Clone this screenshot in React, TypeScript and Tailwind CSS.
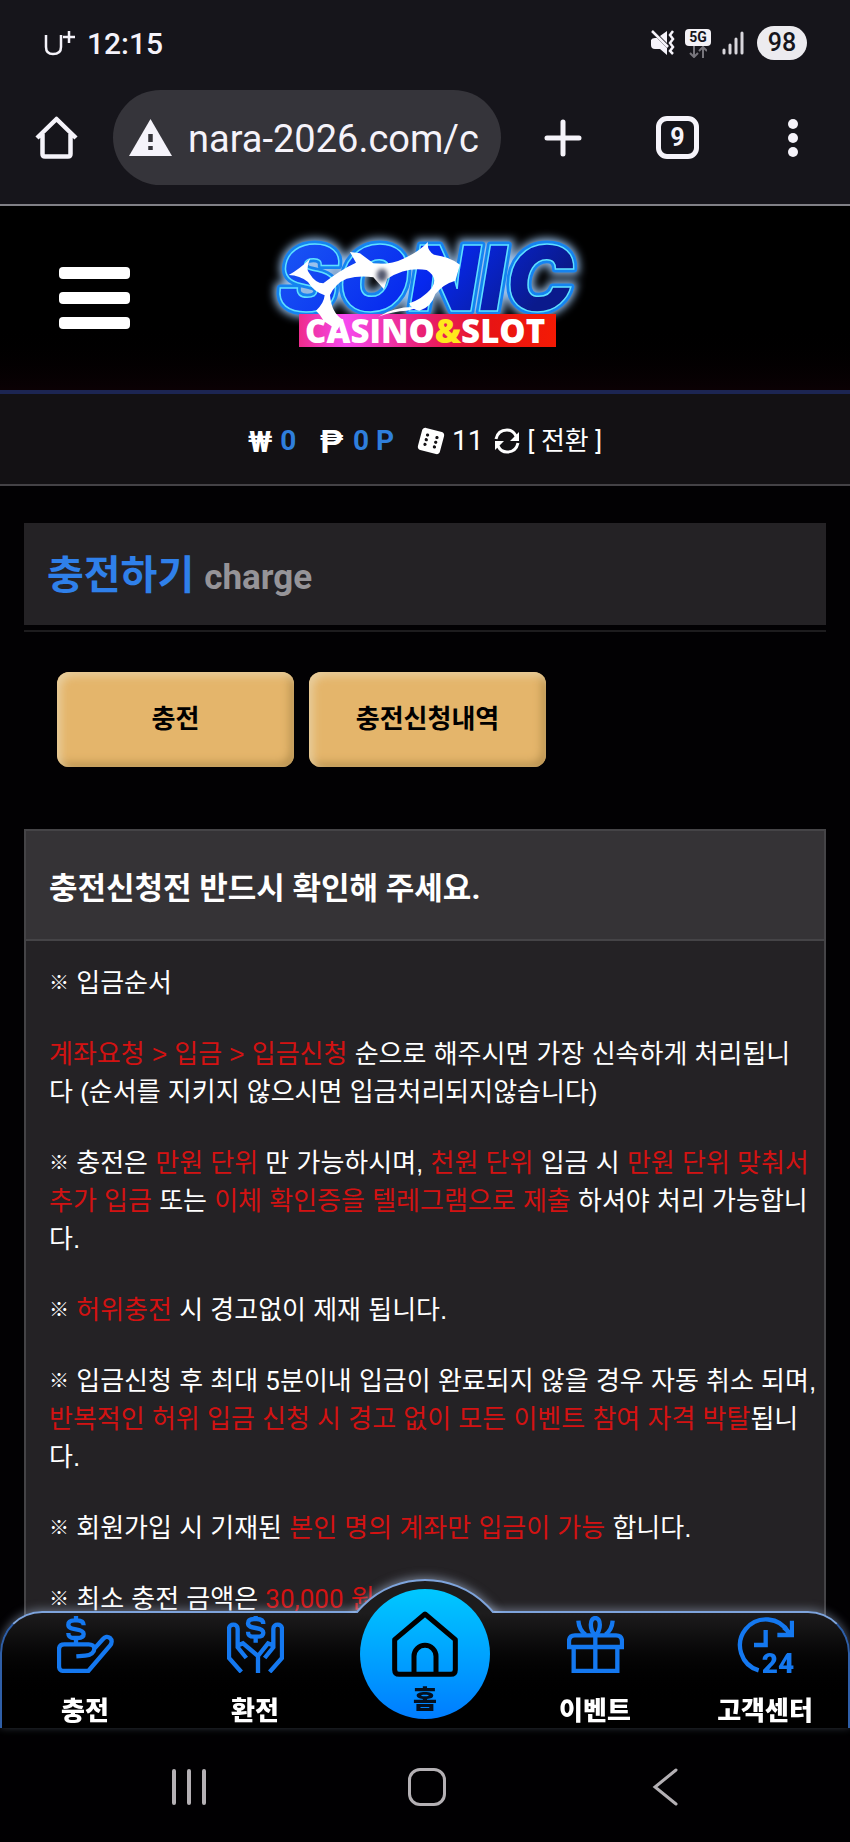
import type { ReactNode } from "react";
import { FaDiceSix } from "react-icons/fa";

function StatusBar() {
  return (
    <div className="flex h-[86px] items-center justify-between px-[43px]">
      <div className="flex items-center gap-3 text-[30px] font-medium">
        <svg width="32" height="26" viewBox="0 0 32 26" fill="none" stroke="currentColor" aria-label="U+">
          <path d="M3 5V17Q3 24 10 24Q18 24 18 17V5" strokeWidth="2.500" />
          <path d="M20 7H32M26 1V13" strokeWidth="2.500" />
        </svg>
        <span>12:15</span>
      </div>
      <div className="flex items-center gap-2.5">
        <svg width="25" height="26" viewBox="0 0 25 26" fill="none" stroke="currentColor">
          <path d="M1 10Q2 8 5 8H7L17 18V25L10 19H5Q1 19 1 15ZM10 6L17 1V13Z" fill="currentColor" stroke="none" />
          <path d="M2 1L18 17" strokeWidth="2.500" />
          <path d="M23 1L20 5L23 9L20 13L23 17L20 21L23 24" strokeWidth="2.500" />
        </svg>
        <div className="flex w-[26px] flex-col items-center">
          <span className="w-[26px] rounded-sm bg-[#f3f1f6] text-center text-[14px] leading-[17px] font-bold text-[#16151b]">
            5G
          </span>
          <svg width="18" height="12" viewBox="0 0 18 12" fill="none" stroke="#77757c" strokeWidth="2">
            <path d="M5 0V11M1 7L5 11L9 7M14 12V1M10 5L14 1L18 5" />
          </svg>
        </div>
        <svg width="24" height="24" viewBox="0 0 24 24" fill="none" stroke="#d8d6dc" strokeWidth="3" strokeLinecap="round">
          <path d="M3 19V22M9 14V22M15 8V22M21 2V22" />
        </svg>
        <span className="ml-0.5 w-[50px] rounded-full bg-[#ecebef] text-center text-[25px] leading-[34px] font-medium text-[#16151b]">
          98
        </span>
      </div>
    </div>
  );
}

function AddressBar() {
  return (
    <div className="flex h-[120px] items-start border-b-2 border-[#808086] pt-1 pl-[35px]">
      <button type="button" aria-label="홈페이지" className="flex h-[95px] items-center">
        <svg width="43" height="43" viewBox="0 0 43 43" fill="none" stroke="currentColor" strokeWidth="4.500" strokeLinejoin="round">
          <path d="M2 22L21.500 3L41 22M7.500 18V38Q7.500 40.500 10 40.500H33Q35.500 40.500 35.500 38V18" />
        </svg>
      </button>
      <div className="ml-[35px] flex h-[95px] min-w-0 flex-1 items-center gap-4 rounded-full bg-[#35343a] pl-4">
        <svg width="43" height="37" viewBox="0 0 43 37" className="shrink-0">
          <path d="M21.500 0L43 37H0Z" fill="#f5f3fa" />
          <path d="M21.500 15V23M21.500 27V31" stroke="#35343a" strokeWidth="4.500" />
        </svg>
        <input
          aria-label="주소"
          readOnly
          value="nara-2026.com/c"
          className="w-full min-w-0 bg-transparent pt-0.5 text-[38px] leading-[48px] outline-none"
        />
      </div>
      <div className="grid h-[95px] w-[349px] shrink-0 grid-cols-3 place-items-center pl-1">
        <button type="button" aria-label="새 탭">
          <svg width="38" height="38" viewBox="0 0 38 38" stroke="currentColor" strokeWidth="5" strokeLinecap="round">
            <path d="M3 19H35M19 3V35" />
          </svg>
        </button>
        <button
          type="button"
          aria-label="탭 9개"
          className="h-[43px] w-[43px] rounded-[11px] border-[5px] border-[#f5f3fa] text-[25px] leading-[33px] font-bold"
        >
          9
        </button>
        <button type="button" aria-label="메뉴">
          <svg width="12" height="38" viewBox="0 0 12 38" fill="currentColor">
            <circle cx="6" cy="5" r="5" />
            <circle cx="6" cy="19" r="5" />
            <circle cx="6" cy="33" r="5" />
          </svg>
        </button>
      </div>
    </div>
  );
}

function Logo() {
  return (
    <svg width="350" height="156" viewBox="0 0 350 156" role="img" aria-label="SONIC CASINO&SLOT">
      <defs>
        <linearGradient id="letters" x1="0" y1="0" x2="1" y2="0.3">
          <stop offset="0" stopColor="#1c5cf5" />
          <stop offset="0.6" stopColor="#0628ee" />
          <stop offset="1" stopColor="#0a1a8c" />
        </linearGradient>
        <linearGradient id="banner" x1="0" y1="0" x2="1" y2="0">
          <stop offset="0" stopColor="#ee2c8c" />
          <stop offset="0.18" stopColor="#f64af0" />
          <stop offset="0.5" stopColor="#e81e6c" />
          <stop offset="0.75" stopColor="#e81414" />
          <stop offset="1" stopColor="#f41a04" />
        </linearGradient>
        <filter id="glow" x="-20%" y="-40%" width="140%" height="180%">
          <feGaussianBlur stdDeviation="4" />
        </filter>
        <filter id="soft" x="-50%" y="-50%" width="200%" height="200%">
          <feGaussianBlur stdDeviation="6" />
        </filter>
      </defs>
      <g fontFamily="Inter" fontWeight="900" fontStyle="italic" fontSize="91">
        <text x="28" y="91" stroke="#9cc4f0" strokeWidth="11" filter="url(#glow)">SONIC</text>
        <text x="28" y="91" fill="#1583f0" stroke="#1583f0" strokeWidth="7" strokeLinejoin="round">SONIC</text>
        <text x="28" y="91" fill="url(#letters)" stroke="#5fe0ff" strokeWidth="1.500">SONIC</text>
      </g>
      <rect x="49" y="94" width="257" height="33" fill="url(#banner)" />
      <text x="55" y="123" fill="#fff" fontFamily="Open Sans" fontWeight="800" fontSize="33">
        CASINO<tspan fill="#ffe81c">&amp;</tspan>SLOT
      </text>
      <g transform="scale(0.3333)" fill="#fff">
        <path
          d="M180 116Q150 146 116 165Q150 166 174 186Q190 214 224 226Q222 250 198 272Q212 284 222 304L262 330L280 300Q244 280 240 225Q256 190 290 176Q330 166 370 172L402 208L412 176Q470 140 530 150Q566 172 545 205Q516 238 478 250Q484 270 508 272Q544 262 556 222Q580 192 616 182L630 134Q600 110 552 104Q530 90 534 66Q506 96 460 116Q420 136 370 130L330 100L300 96L318 128Q270 150 220 190Q196 190 178 160Q166 150 180 116Z"
        />
        <path d="M385 290Q440 256 510 262L470 272Q430 274 385 290Z" />
        <ellipse cx="396" cy="166" rx="16" ry="20" fill="#555a70" filter="url(#soft)" />
      </g>
    </svg>
  );
}

function SiteHeader() {
  return (
    <header className="grid h-[188px] grid-cols-[1fr_auto_1fr] items-center border-b-4 border-[#1c2552] bg-linear-to-b from-black from-60% to-[#0b0104]">
      <button type="button" aria-label="전체 메뉴" className="ml-[59px] flex w-[71px] flex-col gap-[13px]">
        <span className="h-3 rounded-sm bg-white" />
        <span className="h-3 rounded-sm bg-white" />
        <span className="h-3 rounded-sm bg-white" />
      </button>
      <a href="#">
        <Logo />
      </a>
    </header>
  );
}

function BalanceBar() {
  return (
    <div className="flex h-[92px] items-center justify-center border-b-2 border-[#444246] bg-[#131114] pt-1 text-[26px]">
      <span className="text-[30px] font-bold">₩</span>
      <span className="ml-2 text-[28px] font-bold text-[#2f7fdc]">0</span>
      <span className="ml-6 font-['Liberation_Sans'] text-[34px] leading-[36px] font-bold">₱</span>
      <span className="ml-2.5 text-[28px] font-bold text-[#2f7fdc]">0 P</span>
      <FaDiceSix className="ml-6 rotate-15 text-[26px]" />
      <span className="ml-2 text-[28px]">11</span>
      <button type="button" className="ml-2.5 flex items-center gap-2">
        <svg width="26" height="26" viewBox="0 0 26 26" fill="none" stroke="currentColor" strokeWidth="3">
          <path d="M2 11Q4 2 13 2Q19 2 22 8M24 15Q22 24 13 24Q7 24 4 18" />
          <path d="M25 4V13H16ZM1 22V13H10Z" fill="currentColor" stroke="none" />
        </svg>
        <span>[ 전환 ]</span>
      </button>
    </div>
  );
}

function Red({ children }: { children: ReactNode }) {
  return <span className="text-[#d31212]">{children}</span>;
}

// Small reference mark that opens each rule of the notice.
function Mark() {
  return <span className="align-[2px] text-[20px] leading-none font-bold">※</span>;
}

function Notice() {
  return (
    <section className="mt-[62px] border-2 border-[#454447] bg-[#242225]">
      <h2 className="border-b-2 border-[#454447] bg-[#353336] pt-2 pl-[23px] text-[31px] leading-[100px] font-bold">
        충전신청전 반드시 확인해 주세요.
      </h2>
      <div className="flex flex-col gap-[33px] pt-[23px] pb-24 pl-[23px] font-['Liberation_Sans','Noto_Sans_CJK_KR',sans-serif] text-[26px] leading-[38px]">
        <p>
          <Mark /> 입금순서
        </p>
        <p>
          <Red>계좌요청 &gt; 입금 &gt; 입금신청</Red> 순으로 해주시면 가장 신속하게 처리됩니
          <br />다 (순서를 지키지 않으시면 입금처리되지않습니다)
        </p>
        <p>
          <Mark /> 충전은 <Red>만원 단위</Red> 만 가능하시며, <Red>천원 단위</Red> 입금 시{" "}
          <Red>만원 단위 맞춰서 추가 입금</Red> 또는 <Red>이체 확인증을 텔레그램으로 제출</Red> 하셔야 처리
          가능합니다.
        </p>
        <p>
          <Mark /> <Red>허위충전</Red> 시 경고없이 제재 됩니다.
        </p>
        <p>
          <Mark /> 입금신청 후 최대 <span className="font-['Roboto']">5</span>분이내 입금이 완료되지 않을 경우 자동 취소
          되며, <Red>반복적인 허위 입금 신청 시 경고 없이 모든 이벤트 참여 자격 박탈</Red>됩니다.
        </p>
        <p>
          <Mark /> 회원가입 시 기재된 <Red>본인 명의 계좌만 입금이 가능</Red> 합니다.
        </p>
        <p>
          <Mark /> 최소 충전 금액은{" "}
          <Red>
            <span className="font-['Roboto']">30,000</span> 원
          </Red>
        </p>
      </div>
    </section>
  );
}

const TAB_CLASS =
  "h-[95px] w-[237px] rounded-xl bg-[#e4b56b] text-[26px] font-bold text-black shadow-[inset_4px_4px_8px_#e9cf9f,inset_-4px_-4px_8px_#b8914f]";

function Charge() {
  return (
    <main className="px-6 pt-[37px]">
      <div className="border-b-2 border-[#1d1c1e] pb-[5px]">
        <h1 className="flex h-[102px] items-center gap-2.5 bg-[#242225] pt-1 pl-[23px] text-[40px] font-bold text-[#2f80ea]">
          충전하기
          <span className="pt-1 text-[35px] text-[#969498]">charge</span>
        </h1>
      </div>
      <div className="mt-10 ml-[33px] flex gap-[15px]">
        <button type="button" className={TAB_CLASS}>
          충전
        </button>
        <button type="button" className={TAB_CLASS}>
          충전신청내역
        </button>
      </div>
      <Notice />
    </main>
  );
}

const DOLLAR =
  "M80 28C80 16 72 13 60 13H52C39 13 34 18 34 26C34 36 45 38 57 40C70 42 80 45 80 54C80 63 73 66 62 66H52C40 66 34 63 34 51M57 0V13M57 66V84";

function NavItem({ label, children }: { label: string; children: ReactNode }) {
  return (
    <a href="#" className="flex flex-col items-center gap-[19px] pt-[5px] text-[26px] leading-[38px] font-black">
      <svg width="57" height="57" viewBox="0 0 171 171" fill="none" stroke="#1478f0" strokeWidth="13">
        {children}
      </svg>
      {label}
    </a>
  );
}

function BottomNav() {
  return (
    <nav className="relative h-[117px]">
      <div className="absolute inset-0 rounded-t-[42px] border-x-2 border-t-2 border-[#7ea4dc] border-x-[#2f5fa8] bg-linear-to-b from-[#1d1c1d] to-black to-80% shadow-[0_-2px_10px_rgba(190,210,240,0.4)]" />
      {/* raised arch behind the home button */}
      <div className="absolute bottom-[115px] left-1/2 h-[50px] w-[160px] -translate-x-1/2 overflow-hidden">
        <div className="absolute top-4 left-1/2 size-[178px] -translate-x-1/2 rounded-full border-2 border-[#7ea4dc] bg-[#1d1c1d] shadow-[0_-2px_10px_rgba(190,210,240,0.5)]" />
      </div>
      <div className="relative grid grid-cols-5">
        <NavItem label="충전">
          <path d={DOLLAR} />
          <path d="M58 121L85 119C102 118 112 108 112 98C112 90 105 85 95 85H22C10 85 6 91 6 101V149C6 160 10 165 22 165H94L159 89C165 82 166 72 159 66C152 60 144 62 138 69L110 100" />
        </NavItem>
        <NavItem label="환전">
          <path d={DOLLAR} transform="translate(29 -4)" />
          <path d="M43 168L6 126V38C6 22 32 22 32 38V94L58 126M34 88L48 82L93 120M128 168L165 126V38C165 22 139 22 139 38V94L113 126M137 88L123 82L93 120M93 116V171" />
        </NavItem>
        <a
          href="#"
          className="-mt-[22px] flex size-[130px] flex-col items-center justify-self-center rounded-full bg-linear-to-b from-[#00c8ff] to-[#007cff] pt-[22px] text-[26px] leading-[38px] font-black text-[#04101f]"
        >
          <svg width="66" height="66" viewBox="0 0 198 198" fill="none" stroke="#000" strokeWidth="15" strokeLinejoin="round">
            <path d="M99 9L190 86V176Q190 190 176 190H22Q8 190 8 176V86ZM66 190V136A33 33 0 0 1 132 136V190" />
          </svg>
          <span className="mt-1">홈</span>
        </a>
        <NavItem label="이벤트">
          <path d="M6 93V76Q6 58 24 58H147Q165 58 165 76V93ZM20 93V165H151V93M85 58V165" />
          <path d="M85 58C67 42 67 6 85 6C103 6 103 42 85 58M34 14Q36 42 56 56M137 14Q135 42 115 56" />
        </NavItem>
        <NavItem label="고객센터">
          <path d="M65 163A78 78 0 1 1 155 50M165 14V57H121M165 57L140 34M86 42V87H51" />
          <text x="74" y="170" fill="#1478f0" stroke="none" fontFamily="Roboto" fontSize="84" fontWeight="900">
            24
          </text>
        </NavItem>
      </div>
    </nav>
  );
}

function SystemNav() {
  return (
    <div className="grid h-[114px] grid-cols-3 place-items-center bg-[#010002] pt-1 pr-[66px] pl-[70px]">
      <button type="button" aria-label="최근 앱">
        <svg width="36" height="38" viewBox="0 0 36 38" stroke="#b4b0b4" strokeWidth="4" strokeLinecap="round">
          <path d="M3 3V35M18 3V35M33 3V35" />
        </svg>
      </button>
      <button type="button" aria-label="홈" className="size-[38px] rounded-xl border-[3px] border-[#b4b0b4]" />
      <button type="button" aria-label="뒤로">
        <svg width="26" height="38" viewBox="0 0 26 38" fill="none" stroke="#b4b0b4" strokeWidth="3" strokeLinecap="round">
          <path d="M24 2L3 19L24 36" />
        </svg>
      </button>
    </div>
  );
}

export default function App() {
  return (
    <div
      lang="ko"
      className="relative h-screen overflow-hidden bg-[#020103] font-['Roboto','Noto_Sans_CJK_KR',sans-serif] text-white"
    >
      <div className="bg-[#16151b] text-[#f5f3fa]">
        <StatusBar />
        <AddressBar />
      </div>
      <SiteHeader />
      <BalanceBar />
      <Charge />
      <footer className="fixed inset-x-0 bottom-0">
        <BottomNav />
        <SystemNav />
      </footer>
    </div>
  );
}
